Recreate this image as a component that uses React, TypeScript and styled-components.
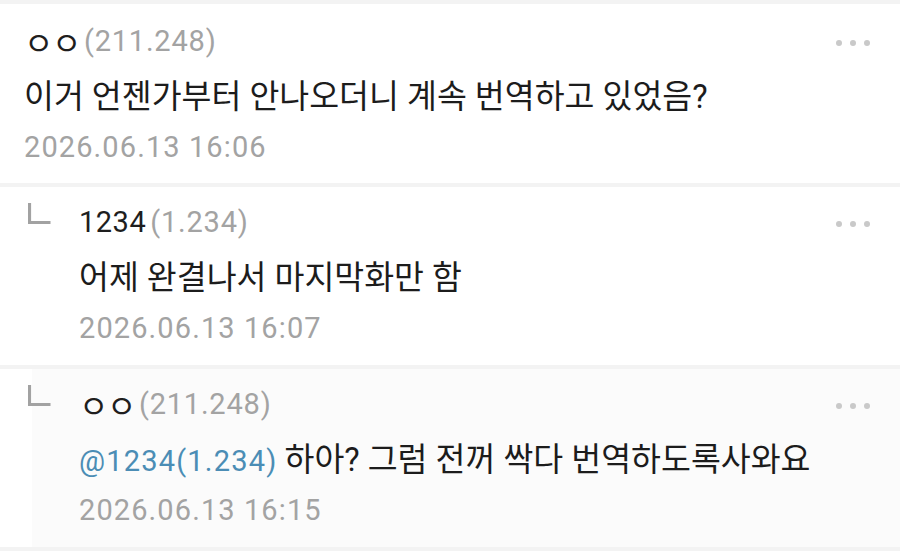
import React from 'react'
import styled, { createGlobalStyle } from 'styled-components'

const GlobalStyle = createGlobalStyle`
  html, body {
    margin: 0;
    padding: 0;
    background: #ffffff;
  }
  body {
    font-family: Roboto, "Noto Sans CJK KR", sans-serif;
  }
`

const List = styled.div`
  width: 900px;
  height: 559px;
  overflow: hidden;
  background: #ffffff;
`

const Divider = styled.div`
  height: 4px;
  background: #f3f3f3;
`

const Item = styled.div<{ $reply?: boolean; $tinted?: boolean }>`
  display: flex;
  height: ${({ $reply }) => ($reply ? 178 : 179)}px;
  box-sizing: border-box;
  padding: ${({ $reply }) => ($reply ? '7px 0 0 0' : '9px 0 0 0')};
  background: ${({ $tinted }) =>
    $tinted ? 'linear-gradient(to right, #ffffff 32px, #fbfbfb 32px)' : '#ffffff'};
`

const ReplyMark = styled.div`
  width: 52px;
  padding: 9px 0 0 28px;
  box-sizing: border-box;
  flex-shrink: 0;
`

const LIcon = () => (
  <svg width="23" height="22" viewBox="0 0 23 22">
    <path d="M1.5 0 V19.5 H22.5" fill="none" stroke="#a2a2a2" strokeWidth="3.2" />
  </svg>
)

const Body = styled.div<{ $reply?: boolean }>`
  flex: 1;
  padding-left: ${({ $reply }) => ($reply ? 27 : 24)}px;
  display: flex;
  flex-direction: column;
`

const Header = styled.div`
  display: flex;
  align-items: center;
  height: 56px;
  padding-right: 30px;
`

const Nick = styled.span<{ $hangul?: boolean }>`
  font-size: ${({ $hangul }) => ($hangul ? 32 : 29)}px;
  color: #1e1e1e;
  font-family: Roboto, "Noto Sans CJK KR", sans-serif;
  letter-spacing: ${({ $hangul }) => ($hangul ? -1.5 : 0.5)}px;
`

const Ip = styled.span`
  font-size: 29px;
  color: #a3a3a3;
  margin-left: 4px;
  letter-spacing: 0.8px;
`

const Dots = styled.div`
  margin-left: auto;
  margin-top: 4px;
  display: flex;
  gap: 8px;
  span {
    width: 6px;
    height: 6px;
    border-radius: 50%;
    background: #c9c9c9;
  }
`

const Text = styled.div`
  height: 56px;
  line-height: 56px;
  font-size: 32.5px;
  color: #1c1c1c;
  font-family: Roboto, "Noto Sans CJK KR", sans-serif;
  white-space: nowrap;
`

const Mention = styled.span`
  font-size: 29px;
  color: #4b8db5;
  margin-right: 7px;
  letter-spacing: 1.2px;
`

const Date = styled.div`
  height: 44px;
  line-height: 44px;
  font-size: 29px;
  color: #a3a3a3;
  letter-spacing: 1.1px;
`

type CommentProps = {
  nick: string
  ip: string
  date: string
  reply?: boolean
  tinted?: boolean
  mention?: string
  children: React.ReactNode
}

const Comment = ({ nick, ip, date, reply, tinted, mention, children }: CommentProps) => (
  <Item $reply={reply} $tinted={tinted}>
    {reply && (
      <ReplyMark>
        <LIcon />
      </ReplyMark>
    )}
    <Body $reply={reply}>
      <Header>
        <Nick $hangul={/[ㄱ-ㅎ가-힣]/.test(nick)}>{nick}</Nick>
        <Ip>({ip})</Ip>
        <Dots>
          <span />
          <span />
          <span />
        </Dots>
      </Header>
      <Text>
        {mention && <Mention>{mention}</Mention>}
        {children}
      </Text>
      <Date>{date}</Date>
    </Body>
  </Item>
)

export default function App() {
  return (
    <>
      <GlobalStyle />
      <List>
        <Divider />
        <Comment nick="ㅇㅇ" ip="211.248" date="2026.06.13 16:06">
          이거 언젠가부터 안나오더니 계속 번역하고 있었음?
        </Comment>
        <Divider />
        <Comment nick="1234" ip="1.234" date="2026.06.13 16:07" reply>
          어제 완결나서 마지막화만 함
        </Comment>
        <Divider />
        <Comment
          nick="ㅇㅇ"
          ip="211.248"
          date="2026.06.13 16:15"
          reply
          tinted
          mention="@1234(1.234)"
        >
          하아? 그럼 전꺼 싹다 번역하도록사와요
        </Comment>
        <Divider />
      </List>
    </>
  )
}
